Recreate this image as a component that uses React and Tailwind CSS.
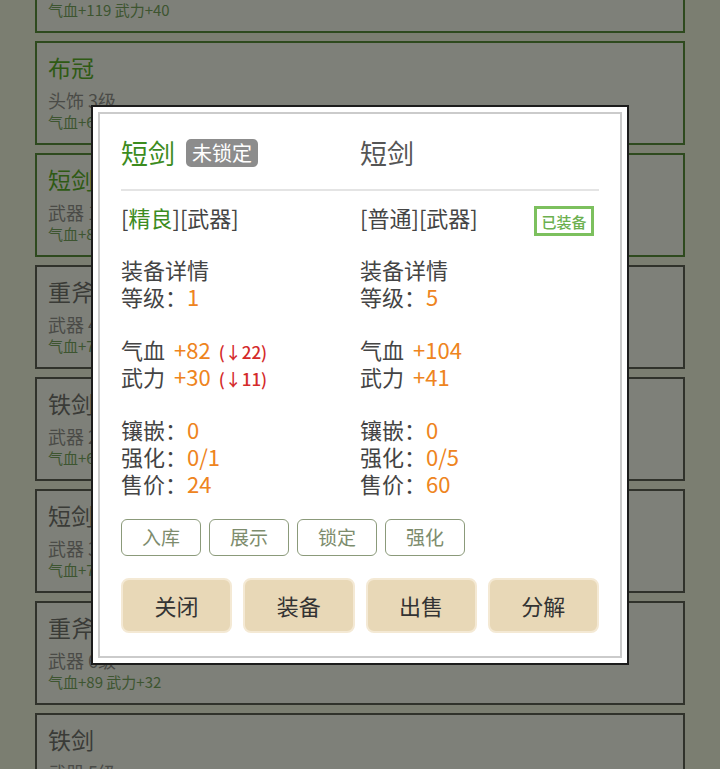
import React from "react";

const items = [
  { name: "重斧", sub: "武器 5级", stats: "气血+119 武力+40", good: true },
  { name: "布冠", sub: "头饰 3级", stats: "气血+66 武力+12", good: true },
  { name: "短剑", sub: "武器 1级", stats: "气血+82 武力+30", good: true },
  { name: "重斧", sub: "武器 4级", stats: "气血+72 武力+28", good: false },
  { name: "铁剑", sub: "武器 2级", stats: "气血+60 武力+22", good: false },
  { name: "短剑", sub: "武器 3级", stats: "气血+70 武力+26", good: false },
  { name: "重斧", sub: "武器 6级", stats: "气血+89 武力+32", good: false },
  { name: "铁剑", sub: "武器 5级", stats: "气血+80 武力+30", good: false },
];

function ItemCard({ item }) {
  return (
    <div
      className={
        item.good
          ? "h-[104px] border-2 border-[#2e4a1e] bg-[#7e8079] px-[11px] pt-[8px]"
          : "h-[104px] border-2 border-[#30322b] bg-[#7e8079] px-[11px] pt-[8px]"
      }
    >
      <div
        className={
          item.good
            ? "text-[23px] leading-[32px] text-[#2f5a14]"
            : "text-[23px] leading-[32px] text-[#3a3b37]"
        }
      >
        {item.name}
      </div>
      <div className="mt-[5px] text-[18px] leading-[24px] text-[#4a4b47]">
        {item.sub}
      </div>
      <div className="text-[15px] leading-[20px] text-[#3d5530]">
        {item.stats}
      </div>
    </div>
  );
}

function Line({ label, value }) {
  return (
    <div className="h-[27px] leading-[27px] text-[#444]">
      {label}
      <span className="text-[#ee8420]">{value}</span>
    </div>
  );
}

function StatLine({ label, value, diff }) {
  return (
    <div className="h-[27px] leading-[27px] text-[#444]">
      {label}
      <span className="ml-[9px] text-[#ee8420]">{value}</span>
      {diff && (
        <span className="ml-[8px] text-[17px] font-medium text-[#d42a2a]">{diff}</span>
      )}
    </div>
  );
}

function Column({ type, quality, good, level, hp, atk, hpDiff, atkDiff, forge, price, equipped }) {
  return (
    <div>
      <div className="flex h-[27px] items-center justify-between leading-[27px] text-[#444]">
        <div>
          [<span className={good ? "text-[#3c8c1e]" : ""}>{quality}</span>][{type}]
        </div>
        {equipped && (
          <div className="mr-[5px] mt-[8px] flex h-[30px] w-[60px] items-center justify-center border-[3px] border-[#7cc05e] text-[15px] font-medium text-[#6cb04f]">
            已装备
          </div>
        )}
      </div>
      <div className="mt-[25px]">
        <div className="h-[27px] leading-[27px] text-[#444]">装备详情</div>
        <Line label="等级：" value={level} />
      </div>
      <div className="mt-[26px]">
        <StatLine label="气血" value={hp} diff={hpDiff} />
        <StatLine label="武力" value={atk} diff={atkDiff} />
      </div>
      <div className="mt-[26px]">
        <Line label="镶嵌：" value="0" />
        <Line label="强化：" value={forge} />
        <Line label="售价：" value={price} />
      </div>
    </div>
  );
}

export default function App() {
  return (
    <div
      className="h-screen overflow-hidden bg-[#7b7e71] px-[35px]"
      style={{ fontFamily: '"Noto Sans CJK SC", "Noto Sans", sans-serif' }}
    >
      <div className="mt-[-71px] flex flex-col gap-[8px]">
        {items.map((item, i) => (
          <ItemCard key={i} item={item} />
        ))}
      </div>

      <div className="fixed inset-0 flex items-center justify-center">
        <div className="h-[560px] w-[538px] border-2 border-[#1c1c1c] bg-white p-[5px]">
          <div className="h-full border-2 border-[#cbcbcb] px-[21px] pt-[21px] text-[22px]">
            <div className="grid h-[36px] grid-cols-2 items-center">
              <div className="flex items-center gap-[11px]">
                <span className="text-[27px] leading-[36px] text-[#3c8c1e]">短剑</span>
                <span className="flex h-[28px] items-center rounded-[5px] bg-[#8c8c8c] px-[6px] text-[20px] leading-[28px] text-white">
                  未锁定
                </span>
              </div>
              <span className="text-[27px] leading-[36px] text-[#555]">短剑</span>
            </div>
            <div className="mt-[18px] h-[2px] bg-[#e4e4e4]"></div>
            <div className="mt-[13px] grid grid-cols-2">
              <Column
                type="武器"
                quality="精良"
                good
                level="1"
                hp="+82"
                atk="+30"
                hpDiff="(↓22)"
                atkDiff="(↓11)"
                forge="0/1"
                price="24"
              />
              <Column
                type="武器"
                quality="普通"
                level="5"
                hp="+104"
                atk="+41"
                forge="0/5"
                price="60"
                equipped
              />
            </div>
            <div className="mt-[22px] flex gap-[8px]">
              {["入库", "展示", "锁定", "强化"].map((t) => (
                <button
                  key={t}
                  className="h-[37px] w-[80px] rounded-[6px] border-[1.5px] border-[#8b9a7a] bg-white text-[19px] text-[#7d8c6d]"
                >
                  {t}
                </button>
              ))}
            </div>
            <div className="mt-[22px] grid grid-cols-4 gap-[11px]">
              {["关闭", "装备", "出售", "分解"].map((t) => (
                <button
                  key={t}
                  className="h-[55px] rounded-[8px] border-2 border-[#f4e9d4] bg-[#e8d8b7] text-[22px] text-[#333]"
                >
                  {t}
                </button>
              ))}
            </div>
          </div>
        </div>
      </div>
    </div>
  );
}
